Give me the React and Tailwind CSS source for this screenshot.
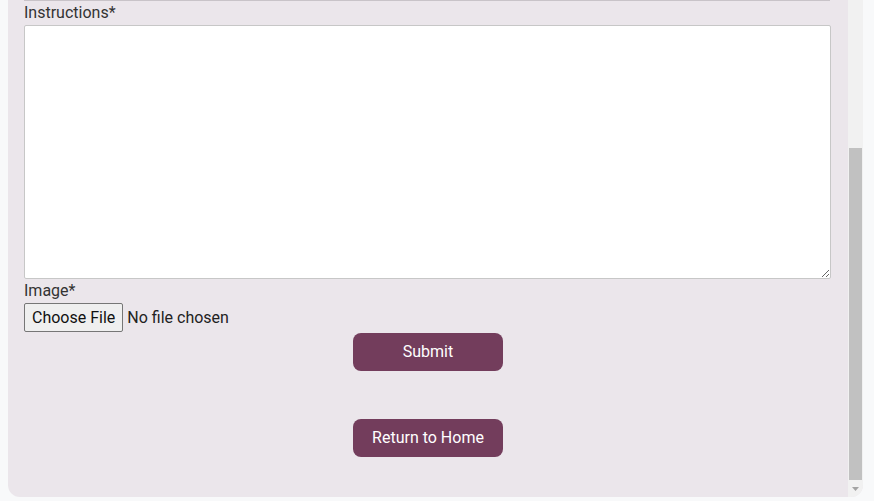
import React from 'react';

function App() {
  return (
    <div className="w-screen h-[501px] overflow-hidden bg-[#f8f9fa] pl-2 pr-[11px] font-['Roboto',sans-serif] text-[#333]">
      <div className="flex h-[497px] rounded-b-[12px] bg-[#ebe6eb] overflow-hidden">
        {/* form body */}
        <div className="flex-1 flex flex-col px-4">
          <div className="h-px bg-[#c8c3c8] mr-[2px]" />
          <label className="text-base leading-6">Instructions*</label>
          <textarea className="h-[254px] mr-px bg-white border border-[#c7c7c7] rounded-[2px] outline-none" />
          <label className="text-base leading-6">Image*</label>
          <div className="h-[30px] flex items-start">
            <input
              type="file"
              className="text-base text-[#222] file:mr-1 file:h-[29px] file:px-[7px] file:rounded-[2px] file:border file:border-[#767676] file:bg-[#efefef] file:text-[#111] file:text-base"
            />
          </div>
          <div className="flex flex-col items-center gap-12">
            <button className="w-[150px] h-[38px] rounded-lg bg-[#733d5c] text-white text-base">Submit</button>
            <button className="w-[150px] h-[38px] rounded-lg bg-[#733d5c] text-white text-base">Return to Home</button>
          </div>
        </div>
        {/* scrollbar */}
        <div className="w-[15px] flex flex-col bg-[#f1f1f1]">
          <div className="h-[148px]" />
          <div className="h-[332px] mx-[1px] bg-[#c1c1c1]" />
          <div className="flex-1 flex items-center justify-center">
            <svg width="7" height="4" viewBox="0 0 7 4">
              <path d="M0 0h7L3.5 4z" fill="#a3a3a3" />
            </svg>
          </div>
        </div>
      </div>
    </div>
  );
}

export default App;
